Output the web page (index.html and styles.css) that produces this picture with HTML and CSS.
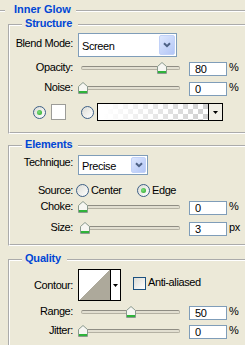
FILE: index.html
```html
<!DOCTYPE html>
<html lang="en">
<head>
    <meta charset="UTF-8">
    <title>Inner Glow</title>
    <link rel="stylesheet" href="styles.css">
</head>
<body>

    <fieldset class="panel">
        <legend class="panel-title">Inner Glow</legend>

        <!-- Structure -->
        <fieldset class="group group-structure">
            <legend class="group-title">Structure</legend>

            <div class="row row-blend">
                <span class="row-label label-combo">Blend Mode:</span>
                <div class="combo combo-blend">
                    <span class="combo-value">Screen</span>
                    <span class="combo-btn">
                        <svg width="8" height="6" viewBox="0 0 8 6"><path d="M1 1.2 L4 4.2 L7 1.2" fill="none" stroke="#4D6185" stroke-width="2"/></svg>
                    </span>
                </div>
            </div>

            <div class="row row-slider row-opacity">
                <span class="row-label">Opacity:</span>
                <div class="slider">
                    <div class="slider-track"></div>
                    <span class="slider-thumb" style="left: 79px">
                        <svg width="10" height="12" viewBox="0 0 10 12"><path d="M0.5 4.5 L5 0.5 L9.5 4.5 V11.5 H0.5 Z" fill="#F6F6F2" stroke="#8A9A8E"/><rect x="1" y="9" width="8" height="2" fill="#2FB33A"/></svg>
                    </span>
                </div>
                <input class="num" type="text" value="80">
                <span class="unit">%</span>
            </div>

            <div class="row row-slider row-noise">
                <span class="row-label">Noise:</span>
                <div class="slider">
                    <div class="slider-track"></div>
                    <span class="slider-thumb" style="left: 0px">
                        <svg width="10" height="12" viewBox="0 0 10 12"><path d="M0.5 4.5 L5 0.5 L9.5 4.5 V11.5 H0.5 Z" fill="#F6F6F2" stroke="#8A9A8E"/><rect x="1" y="9" width="8" height="2" fill="#2FB33A"/></svg>
                    </span>
                </div>
                <input class="num" type="text" value="0">
                <span class="unit">%</span>
            </div>

            <div class="row row-fill">
                <span class="radio checked"></span>
                <span class="color-swatch"></span>
                <span class="radio radio-gradient"></span>
                <div class="gradient-pick">
                    <span class="gradient-preview"></span>
                    <span class="gradient-btn">
                        <svg width="5" height="3" viewBox="0 0 5 3"><path d="M0 0 H5 L2.5 3 Z" fill="#000"/></svg>
                    </span>
                </div>
            </div>
        </fieldset>

        <!-- Elements -->
        <fieldset class="group group-elements">
            <legend class="group-title">Elements</legend>

            <div class="row row-technique">
                <span class="row-label label-combo">Technique:</span>
                <div class="combo combo-technique">
                    <span class="combo-value">Precise</span>
                    <span class="combo-btn">
                        <svg width="8" height="6" viewBox="0 0 8 6"><path d="M1 1.2 L4 4.2 L7 1.2" fill="none" stroke="#4D6185" stroke-width="2"/></svg>
                    </span>
                </div>
            </div>

            <div class="row row-source">
                <span class="row-label label-inline">Source:</span>
                <span class="option option-center"><span class="radio"></span>Center</span>
                <span class="option"><span class="radio checked"></span>Edge</span>
            </div>

            <div class="row row-slider row-choke">
                <span class="row-label">Choke:</span>
                <div class="slider">
                    <div class="slider-track"></div>
                    <span class="slider-thumb" style="left: 0px">
                        <svg width="10" height="12" viewBox="0 0 10 12"><path d="M0.5 4.5 L5 0.5 L9.5 4.5 V11.5 H0.5 Z" fill="#F6F6F2" stroke="#8A9A8E"/><rect x="1" y="9" width="8" height="2" fill="#2FB33A"/></svg>
                    </span>
                </div>
                <input class="num" type="text" value="0">
                <span class="unit">%</span>
            </div>

            <div class="row row-slider row-size">
                <span class="row-label">Size:</span>
                <div class="slider">
                    <div class="slider-track"></div>
                    <span class="slider-thumb" style="left: 2px">
                        <svg width="10" height="12" viewBox="0 0 10 12"><path d="M0.5 4.5 L5 0.5 L9.5 4.5 V11.5 H0.5 Z" fill="#F6F6F2" stroke="#8A9A8E"/><rect x="1" y="9" width="8" height="2" fill="#2FB33A"/></svg>
                    </span>
                </div>
                <input class="num" type="text" value="3">
                <span class="unit">px</span>
            </div>
        </fieldset>

        <!-- Quality -->
        <fieldset class="group group-quality">
            <legend class="group-title">Quality</legend>

            <div class="row row-contour">
                <span class="row-label label-contour">Contour:</span>
                <div class="contour-pick">
                    <span class="contour-preview"></span>
                    <span class="contour-btn">
                        <svg width="5" height="3" viewBox="0 0 5 3"><path d="M0 0 H5 L2.5 3 Z" fill="#000"/></svg>
                    </span>
                </div>
                <span class="check-option"><span class="checkbox"></span>Anti-aliased</span>
            </div>

            <div class="row row-slider row-range">
                <span class="row-label">Range:</span>
                <div class="slider">
                    <div class="slider-track"></div>
                    <span class="slider-thumb" style="left: 48px">
                        <svg width="10" height="12" viewBox="0 0 10 12"><path d="M0.5 4.5 L5 0.5 L9.5 4.5 V11.5 H0.5 Z" fill="#F6F6F2" stroke="#8A9A8E"/><rect x="1" y="9" width="8" height="2" fill="#2FB33A"/></svg>
                    </span>
                </div>
                <input class="num" type="text" value="50">
                <span class="unit">%</span>
            </div>

            <div class="row row-slider row-jitter">
                <span class="row-label">Jitter:</span>
                <div class="slider">
                    <div class="slider-track"></div>
                    <span class="slider-thumb" style="left: 0px">
                        <svg width="10" height="12" viewBox="0 0 10 12"><path d="M0.5 4.5 L5 0.5 L9.5 4.5 V11.5 H0.5 Z" fill="#F6F6F2" stroke="#8A9A8E"/><rect x="1" y="9" width="8" height="2" fill="#2FB33A"/></svg>
                    </span>
                </div>
                <input class="num" type="text" value="0">
                <span class="unit">%</span>
            </div>
        </fieldset>
    </fieldset>

</body>
</html>
```

FILE: styles.css
```css
/* Basic reset */
* {
    box-sizing: border-box;
}

body {
    margin: 0;
    width: 245px;
    height: 345px;
    overflow: hidden;
    background: #ECE9D8;
    font-family: 'Liberation Sans', Arial, sans-serif;
    font-size: 11px;
    letter-spacing: -0.4px;
    color: #000;
}

/* Group boxes */
.panel {
    margin: 4px 0 0 -10px;
    width: 280px;
    padding: 0 0 0 16px;
    border: 2px groove #fff;
}

.panel-title {
    margin-left: -3px;
    padding: 0 5px 3px 9px;
    line-height: 11px;
    font-weight: bold;
    letter-spacing: 0;
    color: #0046D5;
}

.group {
    margin: 0;
    padding: 0;
    border: 2px groove #fff;
}

.group-title {
    margin-left: 12px;
    padding: 0 6px 3px 3px;
    line-height: 11px;
    font-weight: bold;
    letter-spacing: -0.2px;
    color: #0046D5;
}

.group-structure {
    padding-bottom: 11px;
}

.group-elements {
    margin-top: 5px;
    padding-bottom: 8px;
}

.group-quality {
    margin-top: 7px;
    padding-bottom: 20px;
}

/* Rows */
.row {
    display: flex;
    align-items: flex-start;
}

.row-label {
    width: 63px;
    flex: none;
    text-align: right;
    line-height: 10px;
    margin-right: 5px;
}

.label-combo {
    margin-top: 5px;
}

.row-blend { margin-top: 1px; height: 24px; }
.row-opacity { margin-top: 5px; }
.row-noise { margin-top: 6px; }
.row-fill { margin-top: 7px; height: 18px; align-items: center; padding-left: 23px; }
.row-technique { margin-top: 2px; height: 20px; }
.row-technique .label-combo { margin-top: 2px; }
.row-source { margin-top: 9px; height: 13px; align-items: center; }
.row-choke { margin-top: 4px; }
.row-size { margin-top: 7px; }
.row-contour { margin-top: 2px; height: 32px; }
.row-range { margin-top: 5px; }
.row-jitter { margin-top: 5px; }

.row-slider {
    height: 14px;
}

/* Combo boxes */
.combo {
    display: flex;
    height: 100%;
    background: #fff;
    border: 1px solid #7F9DB9;
    padding: 1px;
}

.combo-blend { width: 99px; }
.combo-technique { width: 70px; }

.combo-value {
    flex: 1;
    padding: 2px 0 0 2px;
    line-height: 18px;
}

.row-technique .combo-value {
    line-height: 16px;
    padding-top: 1px;
}

.combo-btn {
    width: 16px;
    display: flex;
    align-items: center;
    justify-content: center;
    border-radius: 2px;
    background: linear-gradient(135deg, #DDE7FE, #B3C6F6);
    border: 1px solid #C2D2F8;
}

.combo-technique .combo-btn {
    width: 15px;
}

/* Sliders */
.slider {
    position: relative;
    width: 103px;
    height: 14px;
    flex: none;
}

.slider-track {
    position: absolute;
    left: 3px;
    top: 4px;
    width: 99px;
    height: 4px;
    border: 1px solid #B4B1A3;
    border-top-color: #8F8D84;
    border-radius: 2px;
    background: #E2DFD1;
}

.slider-thumb {
    position: absolute;
    top: 0;
    display: block;
    line-height: 0;
}

.num {
    width: 38px;
    height: 14px;
    margin: 0 0 0 8px;
    padding: 0 0 0 5px;
    border: 1px solid #7F9DB9;
    background: #fff;
    font: inherit;
    letter-spacing: inherit;
    color: #000;
    line-height: 12px;
}

.unit {
    margin-left: 2px;
    line-height: 10px;
}

/* Radios and checkbox */
.radio {
    width: 13px;
    height: 13px;
    flex: none;
    display: flex;
    align-items: center;
    justify-content: center;
    border-radius: 50%;
    border: 1px solid #3C5F86;
    background: linear-gradient(135deg, #DCDCD5, #fff);
}

.radio.checked::after {
    content: '';
    width: 5px;
    height: 5px;
    border-radius: 50%;
    background: radial-gradient(circle at 40% 40%, #7FE07F, #21A121);
}

.option {
    display: flex;
    align-items: center;
    gap: 2px;
    line-height: 13px;
}

.option-center {
    width: 61px;
    margin-left: -2px;
}

.label-inline {
    line-height: 13px;
}

.check-option {
    display: flex;
    align-items: flex-start;
    gap: 2px;
    margin: 8px 0 0 12px;
    line-height: 11px;
}

.checkbox {
    width: 13px;
    height: 13px;
    border: 1px solid #1C5180;
    background: linear-gradient(135deg, #DCDCD5, #fff);
}

/* Fill swatches */
.color-swatch {
    width: 15px;
    height: 16px;
    margin: 0 15px 0 5px;
    background: #fff;
    border: 1px solid #9C9C98;
}

.gradient-pick {
    display: flex;
    width: 126px;
    height: 18px;
    margin-left: 3px;
    border: 1px solid #000;
}

.gradient-preview {
    flex: 1;
    background:
        linear-gradient(to right, #fff 5%, rgba(255, 255, 255, 0) 100%),
        conic-gradient(#CFCFCF 25%, #fff 0 50%, #CFCFCF 0 75%, #fff 0) 0 0 / 10px 10px;
}

.gradient-btn {
    width: 14px;
    display: flex;
    align-items: center;
    justify-content: center;
    border-left: 1px solid #000;
    background: #F1EFE6;
}

/* Contour */
.contour-pick {
    display: flex;
    width: 43px;
    height: 32px;
    border: 1px solid #000;
    background: #fff;
}

.contour-preview {
    width: 31px;
    background: linear-gradient(to bottom right, #fff 50%, #ADA99B 50%);
}

.contour-btn {
    flex: 1;
    display: flex;
    align-items: center;
    justify-content: center;
    border-left: 1px solid #000;
}

.label-contour {
    margin-top: 11px;
}
```
